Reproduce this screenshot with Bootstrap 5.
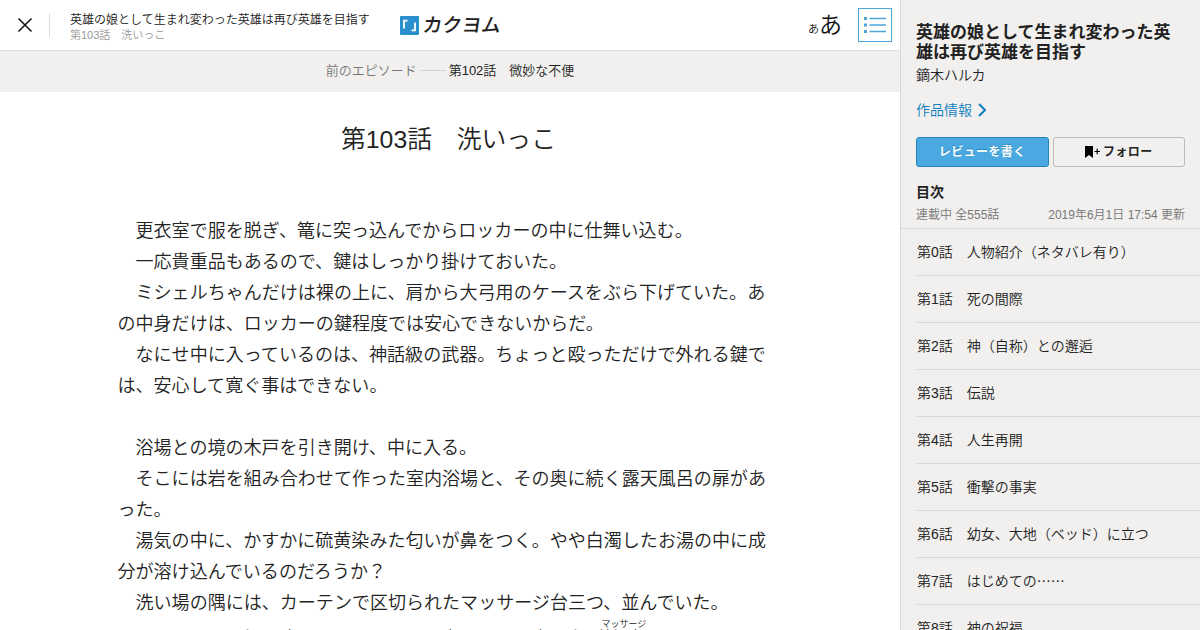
<!DOCTYPE html>
<html lang="ja">
<head>
  <meta charset="UTF-8">
  <meta name="viewport" content="width=device-width, initial-scale=1.0">
  <title>第103話　洗いっこ - カクヨム</title>
  <link href="https://cdn.jsdelivr.net/npm/bootstrap@5.3.0/dist/css/bootstrap.min.css" rel="stylesheet">
  <style>
    body {
      font-family: "Liberation Sans", "Noto Sans CJK JP", sans-serif;
      color: #222;
      background: #fff;
      font-weight: 350;
    }
    a { color: inherit; text-decoration: none; }
    .viewer-header { height: 51px; border-bottom: 1px solid #e0dfdd; }
    .close-btn { width: 50px; height: 24px; border-right: 1px solid #dcdcdc; }
    .work-name { font-size: 12px; line-height: 15px; padding: 5px 0 0 20px; width: 350px; }
    .work-name .episode-name { font-size: 11px; color: #999; }
    .brand { width: 408px; font-size: 19.5px; line-height: 20px; font-weight: 500; }
    .brand svg { margin-right: 4px; }
    .brand-text { transform: skewX(-8deg); }
    .size-btn { color: #111; line-height: 30px; width: 34px; padding-top: 3px; }
    .size-btn .size-s { font-size: 11px; }
    .size-btn .size-l { font-size: 23px; }
    .toc-btn { width: 34px; height: 34px; border: 1px solid #4ca6da; }
    .prev-bar { height: 41px; padding-bottom: 1px; background: #f1f0ee; font-size: 13px; }
    .prev-bar .prev-label { color: #777; }
    .prev-bar .dash { width: 26px; height: 1px; background: #d5d4d2; margin: 0 3px 2px; }
    .episode-title { font-size: 24.8px; line-height: 36px; padding: 30px 3px 0 0; margin: 0 0 57px; font-weight: 350; }
    .episode-body { width: 652px; margin-left: 117.5px; padding-top: 1px; font-size: 18.04px; line-height: 31px; }
    .episode-body p { margin: 0; white-space: nowrap; }
    .episode-body .ruby-line { padding-top: 2px; }
    .episode-body rt { font-size: 9px; line-height: 10px; }
    .side-panel { width: 300px; background: #f1f0ee; border-left: 1px solid #d8d7d5; }
    .side-info { padding: 23px 15px 0; height: 229px; border-bottom: 1px solid #d8d7d5; }
    .side-title { font-size: 17px; line-height: 20px; font-weight: 700; margin: 0; }
    .side-author { font-size: 14px; line-height: 20px; margin-top: 2px; }
    .side-link { font-size: 14px; line-height: 20px; margin-top: 15px; color: #0f7fbf; }
    .side-link svg { margin-left: 6px; }
    .side-btns { margin-top: 17px; }
    .side-btn { height: 30px; padding: 0; font-size: 12px; line-height: 28px; font-weight: 700; border-radius: 3px; }
    .review-btn { background: #4aa9e0; border-color: #2385be; color: #fff; letter-spacing: .4px; text-shadow: 0 -1px 0 #2385be; }
    .follow-btn { border-color: #bbb; color: #222; }
    .follow-btn span { letter-spacing: .4px; margin-left: 2px; }
    .toc-head { font-size: 14px; line-height: 20px; font-weight: 700; margin: 15px 0 0; }
    .toc-meta { font-size: 12px; line-height: 18px; color: #777; margin-top: 4px; }
    .toc-list { margin-left: 16px; font-size: 14px; }
    .toc-list .list-group-item { height: 47px; padding: 0; line-height: 46px; background: none; color: #222; border-color: #d8d7d5; }
    .leader { font-family: "Noto Sans CJK JP", sans-serif; line-height: 1; }
  </style>
</head>
<body>
  <div class="d-flex vh-100 overflow-hidden">
    <main class="flex-grow-1 overflow-hidden">
      <!-- Header -->
      <header class="viewer-header d-flex align-items-center">
        <a href="#" class="close-btn d-flex align-items-center justify-content-center" aria-label="閉じる">
          <svg width="16" height="16" viewBox="0 0 16 16" stroke="#111" stroke-width="1.5"><path d="M1.5 1.5 14.5 14.5M14.5 1.5 1.5 14.5"/></svg>
        </a>
        <div class="work-name text-nowrap">
          <div>英雄の娘として生まれ変わった英雄は再び英雄を目指す</div>
          <div class="episode-name">第103話　洗いっこ</div>
        </div>
        <a href="#" class="brand d-flex align-items-center">
          <svg width="19" height="19" viewBox="0 0 19 19"><rect width="19" height="19" rx="1" fill="#2a8fcd"/><path d="M4 12.5V4.700H7.500M15 6.500V14.300H11.500" fill="none" stroke="#fff" stroke-width="1.800"/></svg>
          <span class="brand-text">カクヨム</span>
        </a>
        <a href="#" class="size-btn d-flex align-items-baseline"><span class="size-s">あ</span><span class="size-l">あ</span></a>
        <a href="#" class="toc-btn d-flex align-items-center justify-content-center ms-auto me-2" aria-label="目次">
          <svg width="22" height="16" viewBox="0 0 22 16" fill="#4ca6da"><path d="M0 0h3v3H0zM0 6.500h3v3H0zM0 13h3v3H0zM5.500 .8H22v1.500H5.500zM5.500 7.300H22v1.500H5.500zM5.500 13.700H22v1.500H5.500z"/></svg>
        </a>
      </header>

      <!-- Previous episode -->
      <a href="#" class="prev-bar d-flex align-items-center justify-content-center">
        <span class="prev-label">前のエピソード</span><span class="dash"></span><span>第102話　微妙な不便</span>
      </a>

      <!-- Episode -->
      <article>
        <h1 class="episode-title text-center">第103話　洗いっこ</h1>
        <div class="episode-body">
          <p>　更衣室で服を脱ぎ、篭に突っ込んでからロッカーの中に仕舞い込む。</p>
          <p>　一応貴重品もあるので、鍵はしっかり掛けておいた。</p>
          <p>　ミシェルちゃんだけは裸の上に、肩から大弓用のケースをぶら下げていた。あ<br>の中身だけは、ロッカーの鍵程度では安心できないからだ。</p>
          <p>　なにせ中に入っているのは、神話級の武器。ちょっと殴っただけで外れる鍵で<br>は、安心して寛ぐ事はできない。</p>
          <p><br></p>
          <p>　浴場との境の木戸を引き開け、中に入る。</p>
          <p>　そこには岩を組み合わせて作った室内浴場と、その奥に続く露天風呂の扉があ<br>った。</p>
          <p>　湯気の中に、かすかに硫黄染みた匂いが鼻をつく。やや白濁したお湯の中に成<br>分が溶け込んでいるのだろうか？</p>
          <p>　洗い場の隅には、カーテンで区切られたマッサージ台三つ、並んでいた。</p>
          <p class="ruby-line">　おそらくこの場に疲れをとりにくるお客さんへ、専属者が<ruby>按摩<rt>マッサージ</rt></ruby>をする。</p>
        </div>
      </article>
    </main>

    <!-- Sidebar -->
    <aside class="side-panel flex-shrink-0">
      <div class="side-info">
        <h2 class="side-title">英雄の娘として生まれ変わった英雄は再び英雄を目指す</h2>
        <div class="side-author">鏑木ハルカ</div>
        <a href="#" class="side-link d-flex align-items-center">作品情報
          <svg width="8" height="14" viewBox="0 0 8 14" fill="none" stroke="#0f7fbf" stroke-width="2"><path d="M1 1l6 6-6 6"/></svg>
        </a>
        <div class="side-btns d-flex gap-1">
          <button class="btn side-btn review-btn w-50">レビューを書く</button>
          <button class="btn side-btn follow-btn w-50 d-flex align-items-center justify-content-center">
            <svg width="16" height="12" viewBox="0 0 16 12"><path d="M0 0h8v12L4 9l-4 3z"/><path d="M9.500 5.500h5.500M12.200 2.800v5.500" stroke="#000" stroke-width="1.200"/></svg><span>フォロー</span>
          </button>
        </div>
        <h3 class="toc-head">目次</h3>
        <div class="toc-meta d-flex justify-content-between"><span>連載中 全555話</span><span>2019年6月1日 17:54 更新</span></div>
      </div>
      <div class="toc-list list-group list-group-flush">
        <a href="#" class="list-group-item">第0話　人物紹介（ネタバレ有り）</a>
        <a href="#" class="list-group-item">第1話　死の間際</a>
        <a href="#" class="list-group-item">第2話　神（自称）との邂逅</a>
        <a href="#" class="list-group-item">第3話　伝説</a>
        <a href="#" class="list-group-item">第4話　人生再開</a>
        <a href="#" class="list-group-item">第5話　衝撃の事実</a>
        <a href="#" class="list-group-item">第6話　幼女、大地（ベッド）に立つ</a>
        <a href="#" class="list-group-item">第7話　はじめての<span class="leader">……</span></a>
        <a href="#" class="list-group-item">第8話　神の祝福</a>
      </div>
    </aside>
  </div>
  <script src="https://cdn.jsdelivr.net/npm/bootstrap@5.3.0/dist/js/bootstrap.bundle.min.js"></script>
</body>
</html>
